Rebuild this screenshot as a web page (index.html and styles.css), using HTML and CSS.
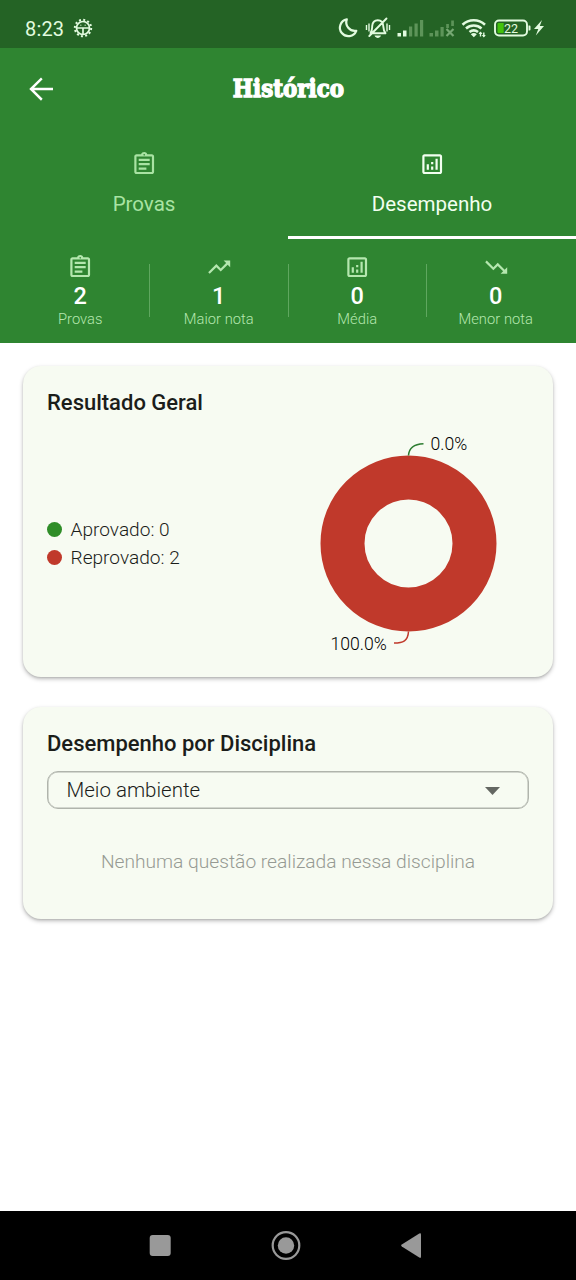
FILE: index.html
```html
<!DOCTYPE html>
<html lang="pt-BR">
<head>
<meta charset="utf-8">
<title>Histórico</title>
<link rel="stylesheet" href="styles.css">
</head>
<body>
<svg class="defs" width="0" height="0">
  <symbol id="assignment" viewBox="0 0 24 24"><path d="M7 15h7v2H7zm0-4h10v2H7zm0-4h10v2H7zm12-4h-4.180C14.400 1.840 13.300 1 12 1s-2.400.840-2.820 2H5c-1.100 0-2 .900-2 2v14c0 1.100.900 2 2 2h14c1.100 0 2-.900 2-2V5c0-1.100-.900-2-2-2zm-7-.250c.410 0 .750.340.750.750s-.340.750-.750.750-.750-.340-.750-.750.340-.750.750-.750zM19 19H5V5h14v14z"/></symbol>
  <symbol id="analytics" viewBox="0 0 24 24"><path d="M19 3H5c-1.100 0-2 .900-2 2v14c0 1.100.900 2 2 2h14c1.100 0 2-.900 2-2V5c0-1.100-.900-2-2-2zm0 16H5V5h14v14zM7 12h2v5H7zm8-5h2v10h-2zm-4 7h2v3h-2zm0-4h2v2h-2z"/></symbol>
  <symbol id="up" viewBox="0 0 24 24"><path d="M16 6l2.290 2.290-4.880 4.880-4-4L2 16.590 3.410 18l6-6 4 4 6.300-6.290L22 12V6z"/></symbol>
  <symbol id="down" viewBox="0 0 24 24"><path d="M16 18l2.290-2.290-4.880-4.880-4 4L2 7.410 3.410 6l6 6 4-4 6.300 6.290L22 12v6z"/></symbol>
</svg>
<div class="screen">
  <div class="status">
    <span class="clock">8:23</span>
    <svg class="gear" width="20" height="20" viewBox="0 0 20 20">
      <circle class="teeth" cx="10" cy="10" r="8.200"/>
      <circle class="ring" cx="10" cy="10" r="6.500"/>
      <path class="ring" d="M3.500 10h13M10 10v6.500"/>
      <circle class="eye" cx="7.800" cy="7.300" r=".8"/><circle class="eye" cx="12.200" cy="7.300" r=".8"/>
    </svg>
    <svg class="indicators" width="212" height="24" viewBox="0 0 212 24">
      <g transform="translate(.5 .5)">
        <path class="line" d="M8.300 3.800A8.500 8.500 0 1 0 17.800 15.300 8.700 8.700 0 0 1 8.300 3.800z"/>
      </g>
      <g transform="translate(-1 .5)">
        <path class="bell" d="M33.500 17.500c1.800-2.500 1.500-4 1.700-7 .3-3.700 2.600-5.800 5.600-5.800 3.300 0 5.300 2.400 5.500 6 .2 3.200.2 4.600 2.200 7zM32.300 20.500L49.500 3"/>
        <path class="solid" d="M37.500 20h6.500c-.8 1.800-1.800 2.400-3.200 2.400S38.300 21.800 37.500 20z"/>
        <path class="thin" d="M29.500 9.500v5M32 8v8M50 8v8M52.500 9.500v5"/>
      </g>
      <g transform="translate(0 -1)">
        <path class="solid" d="M59.500 19h3.500v3.500h-3.500zM65 16.500h3.500v6H65z"/>
        <path class="faint" d="M71 12.500h3.200v10H71zM76.500 9.500h3.200v13h-3.200zM82 6h3.200v16.500H82zM91.500 19H95v3.500h-3.500zM97 16.500h3.500v6H97zM102.500 13h3.200v9.500h-3.200zM108.200 10h2.700v4h-2.700zM113.200 6.500h2.700v5.500h-2.700z"/>
        <path class="cross" d="M108.500 15l7 7M115.500 15l-7 7"/>
      </g>
      <g transform="translate(0 -.5)">
        <path class="wifi" d="M124.500 10.200a16.500 16.500 0 0 1 22.500 0M128 14a11.700 11.700 0 0 1 15.500 0M131.500 17.500a6.800 6.800 0 0 1 8.500 0"/>
        <path class="solid" d="M132.800 19.700a5 5 0 0 1 6 0l-3 3z"/>
        <path class="thin" d="M142.500 17.500v4.500M145.800 18v4"/>
        <path class="solid" d="M140.500 19.500l2-2.500 2 2.500zM143.800 20.500l2 2.500 2-2.500z"/>
      </g>
      <g transform="translate(0 -2)">
        <rect class="bell" x="157" y="7.500" width="32" height="15" rx="4"/>
        <path class="charge" d="M160.500 10h5.200v10h-5.200a1 1 0 0 1-1-1v-8a1 1 0 0 1 1-1z"/>
        <path class="solid" d="M190.500 12.500h1a1 1 0 0 1 1 1v3a1 1 0 0 1-1 1h-1zM204 7l-8 9h4.300l-2.500 6.500 8.200-9.500h-4.200z"/>
        <text class="level" x="166" y="19.500">22</text>
      </g>
    </svg>
  </div>
  <header class="appbar">
    <svg class="back" width="36" height="36" viewBox="0 0 24 24"><path d="M20 11.150H7.400l5.700-5.700L12 4.250 4.150 12 12 19.750l1.100-1.200-5.700-5.700H20z"/></svg>
    <h1 class="title">Histórico</h1>
  </header>
  <nav class="tabs">
    <div class="tab muted"><svg class="icon"><use href="#assignment"/></svg><span class="tab-label">Provas</span></div>
    <div class="tab active"><svg class="icon"><use href="#analytics"/></svg><span class="tab-label">Desempenho</span></div>
  </nav>
  <section class="stats">
    <div class="stat"><svg class="icon"><use href="#assignment"/></svg><b class="value">2</b><span class="name">Provas</span></div>
    <div class="stat"><svg class="icon"><use href="#up"/></svg><b class="value">1</b><span class="name">Maior nota</span></div>
    <div class="stat"><svg class="icon"><use href="#analytics"/></svg><b class="value">0</b><span class="name">Média</span></div>
    <div class="stat"><svg class="icon"><use href="#down"/></svg><b class="value">0</b><span class="name">Menor nota</span></div>
  </section>
  <main class="content">
    <section class="card result">
      <h2 class="heading">Resultado Geral</h2>
      <div class="overview">
        <ul class="legend">
          <li class="entry"><i class="dot pass"></i>Aprovado: 0</li>
          <li class="entry"><i class="dot fail"></i>Reprovado: 2</li>
        </ul>
        <svg class="chart" width="241" height="235" viewBox="0 0 241 235">
          <circle class="donut" cx="120.500" cy="125.500" r="66"/>
          <path class="lead pass-line" d="M120.500 37.500C121 28 128 26 135.500 25.700"/>
          <path class="lead fail-line" d="M120.500 213.500C120 223 115 225 106 225"/>
          <text class="percent" x="142.500" y="32">0.0%</text>
          <text class="percent" x="42.500" y="231.500">100.0%</text>
        </svg>
      </div>
    </section>
    <section class="card subject">
      <h2 class="heading">Desempenho por Disciplina</h2>
      <div class="select"><span>Meio ambiente</span><svg class="arrow" width="15" height="8" viewBox="0 0 15 8"><path class="caret" d="M0 0h15L7.500 8z"/></svg></div>
      <p class="empty">Nenhuma questão realizada nessa disciplina</p>
    </section>
  </main>
  <footer class="navbar">
    <svg width="576" height="69" viewBox="0 0 576 69">
      <rect class="key" x="149.700" y="24" width="21" height="21" rx="3"/>
      <circle class="key-ring" cx="286" cy="34.500" r="13.300"/><circle class="key" cx="286" cy="34.500" r="8.200"/>
      <path class="key" d="M401.800 33.500L419.300 22.600q1.700-.9 1.700 1v22q0 1.900-1.700 1L401.800 35.500q-1.500-1 0-2z"/>
    </svg>
  </footer>
</div>
</body>
</html>
```
FILE: styles.css
```css
* { box-sizing: border-box; }
body { margin: 0; background: #fff; font-family: Roboto, "Liberation Sans", sans-serif; color: #1b1d1a; }
.defs { position: absolute; }
.screen { width: 576px; height: 1280px; display: flex; flex-direction: column; overflow: hidden; }

.status { height: 48px; background: #246325; display: flex; align-items: center; padding: 8px 26px 0 25px; color: #e2fbdf; }
.clock { font-size: 20px; line-height: 24px; width: 48px; padding-top: 1px; letter-spacing: .15px; }
.gear { margin-top: -1px; }
.teeth { fill: none; stroke: #e2fbdf; stroke-width: 2; stroke-dasharray: 2 2.290; }
.ring { fill: none; stroke: #e2fbdf; stroke-width: 1.700; }
.eye { fill: #a5cda2; }
.indicators { margin: -3px 0 0 auto; overflow: visible; }
.line { fill: none; stroke: #e2fbdf; stroke-width: 2.200; stroke-linejoin: round; stroke-linecap: round; }
.bell { fill: none; stroke: #e2fbdf; stroke-width: 1.900; stroke-linejoin: round; stroke-linecap: round; }
.thin { fill: none; stroke: #e2fbdf; stroke-width: 1.400; }
.solid { fill: #e2fbdf; }
.faint { fill: #5d9459; }
.cross { stroke: #76a873; stroke-width: 2.200; }
.wifi { fill: none; stroke: #e2fbdf; stroke-width: 2.600; }
.charge { fill: #43c20c; }
.level { fill: #e2fbdf; font-size: 12.500px; }

.appbar { height: 82px; background: #2f8531; position: relative; display: flex; align-items: center; justify-content: center; }
.back { position: absolute; left: 23px; top: 23px; fill: #fff; }
.title { margin: 0; color: #fff; font: bold 24px/32px "DejaVu Serif", serif; -webkit-text-stroke: 1.400px #fff; transform: scaleX(.89); }

.tabs { height: 109px; background: #2f8531; display: flex; }
.tab { flex: 1; display: flex; flex-direction: column; align-items: center; padding-top: 21px; }
.icon { width: 26.400px; height: 26.400px; fill: currentColor; flex: none; }
.tab-label { font-size: 20.500px; line-height: 24px; margin-top: 15px; }
.muted { color: #a9e3a3; }
.active { color: #f2fff0; border-bottom: 3px solid #fff; }

.stats { height: 104px; background: #2f8531; display: flex; padding: 0 11px; color: #b5e7af; }
.stat { flex: 1; display: flex; flex-direction: column; align-items: center; padding-top: 15px; position: relative; }
.stat + .stat::before { content: ""; position: absolute; left: -.5px; top: 25px; width: 1px; height: 53px; background: #5fa75f; }
.value { color: #fff; font-size: 23.500px; line-height: 28px; font-weight: 500; margin-top: 2px; }
.name { font-size: 14.700px; line-height: 18px; font-weight: 300; letter-spacing: .05px; }

.content { flex: 1; padding: 23px 23px 0; display: flex; flex-direction: column; gap: 30px; }
.card { background: #f7fbf2; border-radius: 18px; padding: 24px; box-shadow: 0 2px 4px rgba(0,0,0,.26), 0 1px 2px rgba(0,0,0,.1); }
.heading { margin: 0; font-size: 22px; line-height: 26px; font-weight: 500; }
.result { height: 311px; }
.subject { height: 212px; }
.overview { display: flex; height: 235px; margin-top: 2px; }
.legend { list-style: none; margin: 0; padding: 0; flex: 1; display: flex; flex-direction: column; justify-content: flex-start; padding-top: 97px; }
.entry { display: flex; align-items: center; height: 28px; font-size: 19.100px; font-weight: 300; }
.dot { width: 15px; height: 15px; border-radius: 50%; margin-right: 8.500px; }
.pass { background: #2f8d28; }
.fail { background: #c0392b; }
.chart { flex: none; }
.donut { fill: none; stroke: #c0392b; stroke-width: 44; }
.lead { fill: none; stroke-width: 1.500; }
.pass-line { stroke: #2e7d32; }
.fail-line { stroke: #c0392b; }
.percent { font-size: 17.600px; font-weight: 300; fill: #000; }
.select { height: 38px; margin-top: 14px; border: 1px solid #b0b4ac; box-shadow: inset 0 0 0 .5px #b0b4ac; border-radius: 11px; display: flex; align-items: center; justify-content: space-between; padding: 0 28px 0 18.500px; font-size: 20.500px; font-weight: 300; }
.arrow { margin-top: 2px; }
.caret { fill: #646762; }
.empty { margin: 41px 0 0; text-align: center; font-size: 19.200px; line-height: 24px; font-weight: 300; color: #969a93; }

.navbar { height: 69px; background: #000; }
.navbar svg { display: block; }
.key { fill: #999; }
.key-ring { fill: none; stroke: #999; stroke-width: 2.200; }
```
